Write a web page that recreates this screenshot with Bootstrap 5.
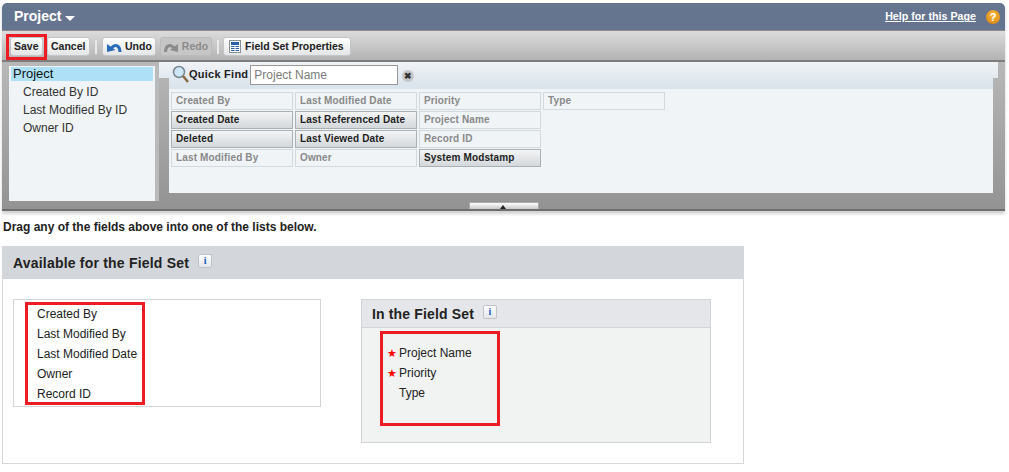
<!DOCTYPE html>
<html lang="en">
<head>
  <meta charset="UTF-8">
  <title>Project Field Set</title>
  <link href="https://cdn.jsdelivr.net/npm/bootstrap@5.3.0/dist/css/bootstrap.min.css" rel="stylesheet">
  <style>
    body {
      background: #fff;
      color: #222;
      font-family: "Liberation Sans", Arial, sans-serif;
      font-size: 12px;
      height: 472px;
      overflow: hidden;
      padding: 3px 4px 0 2px;
    }
    .editor-shell {
      width: 1003px;
      box-shadow: 0 3px 3px rgba(0, 0, 0, .18);
    }
    .editor-head {
      height: 28px;
      background: #66758f;
      border-radius: 5px 5px 0 0;
      border-bottom: 1px solid #8d8a8c;
      padding: 0 5px 0 12px;
      color: #fff;
    }
    .editor-title {
      font-size: 14px;
      font-weight: 700;
      margin-right: 4px;
    }
    .help-link {
      color: #fff;
      font-size: 10.7px;
      font-weight: 700;
      margin-right: 10px;
    }
    .help-dot {
      width: 14px;
      height: 14px;
      border-radius: 50%;
      background: radial-gradient(circle at 50% 35%, #f8b83c, #d67f0c);
      color: #fff;
      font-size: 11px;
      font-weight: 700;
      line-height: 14px;
      text-align: center;
    }
    .editor-tools {
      height: 31px;
      background: linear-gradient(#dcdcdc, #b3b3b3);
      border-bottom: 2px solid #7d7d7d;
      padding: 2px 0 0 4px;
    }
    .save-mark {
      border: 3px solid #ed1c24;
      padding: 0 1px;
      height: 26px;
    }
    .tool-btn {
      height: 19px;
      background: linear-gradient(#fff, #e4e5e6);
      border: 1px solid #c3c5c8;
      border-radius: 3px;
      padding: 0 3px;
      color: #222;
      font-size: 10.5px;
      font-weight: 700;
      white-space: nowrap;
    }
    .tool-btn.is-off {
      background: #c6c6c6;
      border-color: #bbb;
      color: #8b8b8b;
    }
    .tool-cancel { padding: 0 3.5px; }
    .tool-icon { gap: 3px; }
    .tool-props {
      gap: 4px;
      margin-left: -1px;
      padding: 0 6px 0 5px;
    }
    .tool-sep {
      width: 2px;
      height: 14px;
      background: #e9e9e9;
      margin: 0 5px;
    }
    .editor-body {
      height: 149px;
      background: linear-gradient(#b8b8b8, #939393);
      border-bottom: 2px solid #6e6e6e;
    }
    .side-col {
      width: 157px;
      height: 140px;
      padding: 4px 0 0 7px;
      flex: none;
    }
    .side-list {
      width: 150px;
      height: 135px;
      background: #f0f4f7;
      border-right: 4px solid #b9babb;
      padding: 1px 0 0 2px;
      font-size: 12px;
      line-height: 18px;
      color: #333;
    }
    .side-root {
      background: #aee0f8;
      color: #111;
      font-size: 13px;
      height: 14px;
      line-height: 14px;
      padding-left: 2px;
      margin-right: 2px;
      margin-bottom: 2px;
    }
    .side-item { padding-left: 12px; }
    .main-col {
      flex: 1;
      position: relative;
      padding-right: 12px;
    }
    .find-bar {
      position: relative;
      z-index: 1;
      height: 16px;
      margin-right: -5px;
      background: linear-gradient(#f0f3f6, #e2e9ef);
      padding: 3px 0 0 13px;
      font-size: 11px;
      font-weight: 700;
      letter-spacing: .25px;
      line-height: 18px;
    }
    .find-input {
      width: 148px;
      height: 20px;
      margin: 0 4px 0 2px;
      background: #fff;
      border: 1px solid #999;
      color: #7c7c7c;
      font-size: 12px;
      font-weight: 400;
      letter-spacing: 0;
      line-height: 18px;
      padding-left: 3px;
    }
    .find-clear {
      width: 12px;
      height: 12px;
      margin-top: 5px;
      border-radius: 50%;
      background: #c5c7c9;
      color: #333;
      font-size: 9px;
      font-weight: 700;
      line-height: 12px;
      text-align: center;
      letter-spacing: 0;
    }
    .field-area {
      margin-left: 10px;
      height: 115px;
      background: linear-gradient(#e2e9ef, #d9e3eb 11px, #f0f4f7 11px);
      padding: 14px 0 0 2px;
      display: grid;
      grid-template-rows: repeat(4, 18px);
      grid-template-columns: repeat(4, 122px);
      grid-auto-flow: column;
      gap: 1px 2px;
      align-content: start;
    }
    .field-cell {
      border: 1px solid #d2dadd;
      padding: 0 4px;
      font-size: 10px;
      font-weight: 700;
      letter-spacing: .15px;
      line-height: 15px;
      color: #888;
      white-space: nowrap;
    }
    .field-cell.is-free {
      background: linear-gradient(#f3f4f5, #d4d8db);
      border-color: #a9b1b7;
      color: #222;
    }
    .collapse-tab {
      position: absolute;
      left: 310px;
      bottom: 0;
      width: 70px;
      height: 7px;
      background: linear-gradient(#fff, #c9c9c9);
      border: 1px solid #aaa;
      border-bottom: 0;
    }
    .collapse-tab::after {
      content: "";
      position: absolute;
      left: 30px;
      top: 2px;
      border: 3.5px solid transparent;
      border-top: 0;
      border-bottom: 4px solid #222;
    }
    .drag-note {
      margin: 9px 0 12px 1px;
      height: 14px;
      font-size: 12px;
      font-weight: 700;
      line-height: 14px;
    }
    .avail-box {
      width: 742px;
      height: 218px;
      border: 1px solid #d5d7da;
      border-top: 0;
    }
    .avail-head {
      height: 33px;
      margin: 0 -1px;
      background: #d3d6da;
      padding: 2px 0 0 11px;
      font-size: 14px;
      font-weight: 700;
      letter-spacing: .2px;
      color: #222;
    }
    .info-btn {
      width: 14px;
      height: 14px;
      margin-left: 9px;
      margin-top: -5px;
      background: linear-gradient(#fff, #e4e6ea);
      border: 1px solid #c0c3c7;
      border-radius: 2px;
      color: #1a5fc0;
      font-family: "Liberation Serif", serif;
      font-size: 10px;
      font-weight: 700;
      letter-spacing: 0;
      line-height: 12px;
      text-align: center;
    }
    .avail-body {
      padding: 20px 32px 0 10px;
      gap: 40px;
    }
    .from-list {
      width: 308px;
      height: 108px;
      border: 1px solid #d1d5d8;
      padding: 2px 0 0 11px;
    }
    .red-list {
      border: 3px solid #ed1c24;
      width: 120px;
      height: 103px;
      padding: 0 0 0 9px;
      font-size: 12px;
      line-height: 20px;
    }
    .red-list > div:first-child { margin-top: -1px; }
    .set-box {
      width: 350px;
      height: 144px;
      background: #f1f3f3;
      border: 1px solid #d1d5d8;
    }
    .set-head {
      height: 28px;
      background: #e4e6e9;
      border-bottom: 1px solid #d1d5d8;
      padding: 2px 0 0 10px;
      font-size: 14px;
      font-weight: 700;
      letter-spacing: .15px;
    }
    .red-set {
      border: 3px solid #ed1c24;
      width: 120px;
      height: 95px;
      margin: 3px 0 0 18px;
      padding: 9px 0 0 4px;
      font-size: 12px;
      line-height: 20px;
    }
    .red-set > div { height: 20px; }
    .req-star {
      display: inline-block;
      width: 12px;
      height: 20px;
      color: #f00;
      font-size: 11px;
      line-height: 21px;
      vertical-align: top;
    }
  </style>
</head>
<body>
  <div class="editor-shell">
    <div class="editor-head d-flex align-items-center">
      <span class="editor-title">Project</span>
      <svg width="10" height="5" viewBox="0 0 10 5" class="mt-1"><path d="M0 0h10L5 5z" fill="#fff"/></svg>
      <a href="#" class="help-link ms-auto">Help for this Page</a>
      <span class="help-dot">?</span>
    </div>
    <div class="editor-tools d-flex align-items-center">
      <div class="save-mark d-flex align-items-center"><button class="tool-btn" type="button">Save</button></div>
      <button class="tool-btn tool-cancel" type="button">Cancel</button>
      <span class="tool-sep"></span>
      <button class="tool-btn tool-icon d-flex align-items-center" type="button">
        <svg width="16" height="12" viewBox="0 0 16 12"><path d="M14 11C14 5 9.500 2 5.500 7" fill="none" stroke="#2a6bb8" stroke-width="3"/><path d="M1 3l8.500 6L1 11z" fill="#2a6bb8"/></svg>Undo
      </button>
      <button class="tool-btn tool-icon is-off d-flex align-items-center ms-1" type="button" disabled>
        <svg width="15" height="12" viewBox="0 0 15 12"><path d="M1.500 11C1.500 5 6 2 10 7" fill="none" stroke="#8b8b8b" stroke-width="3"/><path d="M14 3 6 9l8 2z" fill="#8b8b8b"/></svg>Redo
      </button>
      <span class="tool-sep"></span>
      <button class="tool-btn tool-props d-flex align-items-center" type="button">
        <svg width="12" height="13" viewBox="0 0 12 13"><rect x=".5" y=".5" width="11" height="12" fill="#fff" stroke="#8a9099"/><path d="M2 2h8v3H2zM2 6h3.500v1H2zm4.500 0H10v1H6.500zM2 8h3.500v1H2zm4.500 0H10v1H6.500zM2 10h3.500v1H2zm4.500 0H10v1H6.500z" fill="#2a5fae"/></svg>Field Set Properties
      </button>
    </div>
    <div class="editor-body d-flex">
      <div class="side-col">
        <div class="side-list">
          <div class="side-root">Project</div>
          <div class="side-item">Created By ID</div>
          <div class="side-item">Last Modified By ID</div>
          <div class="side-item">Owner ID</div>
        </div>
      </div>
      <div class="main-col">
        <div class="find-bar d-flex align-items-start">
          <svg width="17" height="18" viewBox="0 0 17 18"><circle cx="7" cy="7" r="5.500" fill="#cfe6f5" stroke="#77858f" stroke-width="1.500"/><path d="m11 11 5 6" stroke="#8a6a44" stroke-width="2.500"/></svg>
          <span>Quick Find</span>
          <span class="find-input">Project Name</span>
          <span class="find-clear">✖</span>
        </div>
        <div class="field-area">
          <div class="field-cell">Created By</div>
          <div class="field-cell is-free">Created Date</div>
          <div class="field-cell is-free">Deleted</div>
          <div class="field-cell">Last Modified By</div>
          <div class="field-cell">Last Modified Date</div>
          <div class="field-cell is-free">Last Referenced Date</div>
          <div class="field-cell is-free">Last Viewed Date</div>
          <div class="field-cell">Owner</div>
          <div class="field-cell">Priority</div>
          <div class="field-cell">Project Name</div>
          <div class="field-cell">Record ID</div>
          <div class="field-cell is-free">System Modstamp</div>
          <div class="field-cell">Type</div>
        </div>
        <div class="collapse-tab"></div>
      </div>
    </div>
  </div>

  <div class="drag-note">Drag any of the fields above into one of the lists below.</div>

  <div class="avail-box">
    <div class="avail-head d-flex align-items-center">Available for the Field Set<span class="info-btn">i</span></div>
    <div class="avail-body d-flex">
      <div class="from-list">
        <div class="red-list">
          <div>Created By</div>
          <div>Last Modified By</div>
          <div>Last Modified Date</div>
          <div>Owner</div>
          <div>Record ID</div>
        </div>
      </div>
      <div class="set-box">
        <div class="set-head d-flex align-items-center">In the Field Set<span class="info-btn">i</span></div>
        <div class="red-set">
          <div><span class="req-star">★</span>Project Name</div>
          <div><span class="req-star">★</span>Priority</div>
          <div><span class="req-star"></span>Type</div>
        </div>
      </div>
    </div>
  </div>
  <script src="https://cdn.jsdelivr.net/npm/bootstrap@5.3.0/dist/js/bootstrap.bundle.min.js"></script>
</body>
</html>
